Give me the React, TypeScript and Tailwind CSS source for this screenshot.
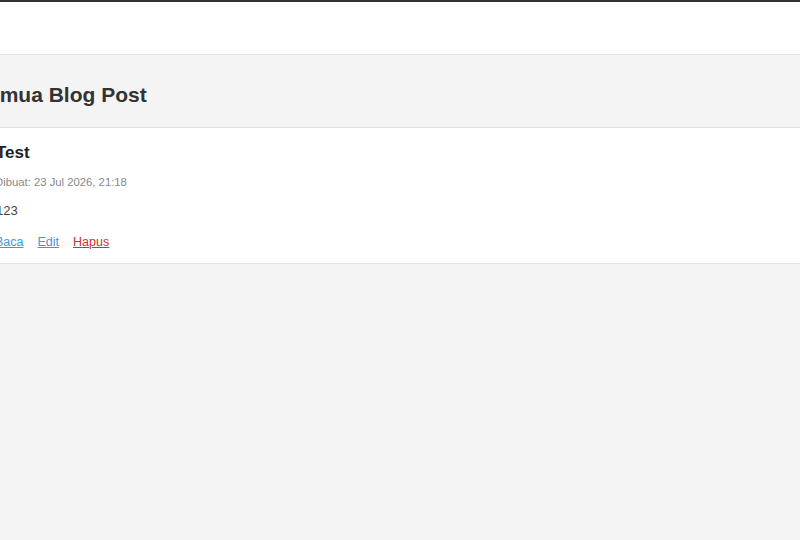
export default function App() {
  return (
    <div
      className="min-h-[540px] bg-[#f4f4f4] border-t-2 border-[#333]"
      style={{ fontFamily: '"Liberation Sans", Arial, sans-serif' }}
    >
      <header className="h-[53px] bg-white border-b border-[#e2e2e2]" />
      <section className="border-b border-[#e2e2e2] pt-[26px] pb-[18px]">
        <h1 className="ml-[-26px] text-[21px] leading-[28px] font-bold text-[#333] whitespace-nowrap">
          Semua Blog Post
        </h1>
      </section>
      <article className="bg-white border-b border-[#e2e2e2] pt-[14px] pb-[13px] pl-0">
        <div className="ml-[-4px]">
          <h2 className="text-[17px] leading-[22px] font-bold text-[#222]">Test</h2>
          <p className="mt-[10px] ml-[-1px] text-[11.3px] leading-[16px] text-[#888]">
            Dibuat: 23 Jul 2026, 21:18
          </p>
          <p className="mt-[12px] text-[13px] leading-[18px] text-[#444]">123</p>
          <div className="mt-[14px] ml-[-1px] flex gap-[14px] text-[12.5px] leading-[16px]">
            <a href="#" className="text-[#4a90e2] underline">Baca</a>
            <a href="#" className="text-[#4a90e2] underline">Edit</a>
            <a href="#" className="text-[#d32f2f] underline">Hapus</a>
          </div>
        </div>
      </article>
    </div>
  );
}
